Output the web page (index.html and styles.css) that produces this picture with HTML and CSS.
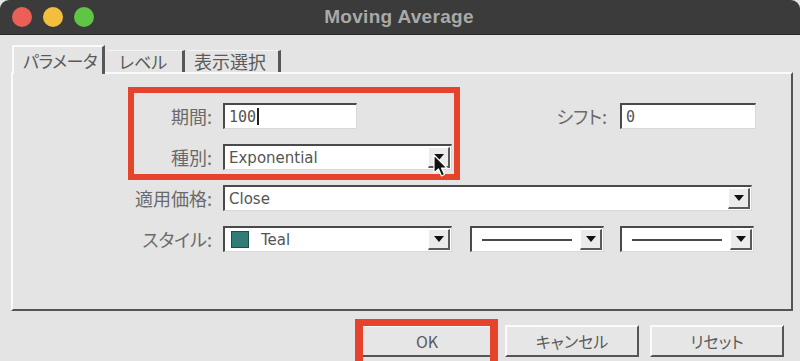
FILE: index.html
```html
<!DOCTYPE html>
<html lang="ja">

<head>
    <meta charset="UTF-8">
    <meta name="viewport" content="width=device-width, initial-scale=1.0">
    <title>Moving Average</title>
    <link rel="stylesheet" href="styles.css">
</head>

<body>
    <div class="window">
        <div class="titlebar">
            <div class="lights">
                <span class="light red"></span>
                <span class="light yellow"></span>
                <span class="light green"></span>
            </div>
            <div class="title">Moving Average</div>
        </div>

        <div class="dialog">
            <div class="tabs">
                <div class="tab active">パラメータ</div>
                <div class="tab">レベル</div>
                <div class="tab">表示選択</div>
            </div>

            <div class="panel">
                <div class="row">
                    <label class="label">期間:</label>
                    <div class="field w134 mono">100<span class="caret"></span></div>
                    <label class="label shift-label">シフト:</label>
                    <div class="field w136 mono">0</div>
                </div>
                <div class="row">
                    <label class="label">種別:</label>
                    <div class="field select w229">
                        <span class="value">Exponential</span>
                        <span class="drop"><span class="tri"></span></span>
                    </div>
                </div>
                <div class="row">
                    <label class="label">適用価格:</label>
                    <div class="field select w529">
                        <span class="value">Close</span>
                        <span class="drop"><span class="tri"></span></span>
                    </div>
                </div>
                <div class="row">
                    <label class="label">スタイル:</label>
                    <div class="field select w229">
                        <span class="swatch"></span>
                        <span class="value">Teal</span>
                        <span class="drop"><span class="tri"></span></span>
                    </div>
                    <div class="field select w134 gap18">
                        <span class="line"></span>
                        <span class="drop"><span class="tri"></span></span>
                    </div>
                    <div class="field select w134 gap16">
                        <span class="line"></span>
                        <span class="drop"><span class="tri"></span></span>
                    </div>
                </div>
            </div>

            <div class="buttons">
                <button class="btn">OK</button>
                <button class="btn">キャンセル</button>
                <button class="btn">リセット</button>
            </div>
        </div>
    </div>

    <!-- annotations drawn over the dialog -->
    <div class="mark mark-fields"></div>
    <div class="mark mark-ok"></div>
    <svg class="pointer" width="16" height="24" viewBox="0 0 16 24">
        <path d="M1 1 L1 19 L5.5 15 L8.5 22 L11.5 20.5 L8.5 14 L14 14 Z" fill="#111" stroke="#fff" stroke-width="1.2" stroke-linejoin="round"/>
    </svg>
</body>

</html>
```

FILE: styles.css
```css
body {
    margin: 0;
    width: 800px;
    height: 361px;
    overflow: hidden;
    background: #e4e4e4;
    font-family: "Noto Sans CJK JP", "DejaVu Sans", sans-serif;
    font-feature-settings: "palt";
    position: relative;
}

.window {
    height: 361px;
    background: #e4e4e4;
}

.titlebar {
    height: 35px;
    background: #3b3b3b;
    border-radius: 9px 9px 0 0;
    display: flex;
    align-items: center;
    position: relative;
    border-bottom: 1px solid #2a2a2a;
    box-sizing: border-box;
}

.lights {
    display: flex;
    gap: 11px;
    padding-left: 12px;
    padding-bottom: 1px;
}

.light {
    width: 20px;
    height: 20px;
    border-radius: 50%;
}

.red {
    background: #ec5f57;
}

.yellow {
    background: #f4bd3b;
}

.green {
    background: #5ec545;
}

.title {
    flex: 1;
    text-align: center;
    margin-right: 96px;
    color: #a9a9a9;
    font-family: "Liberation Sans", sans-serif;
    font-weight: bold;
    font-size: 19px;
    letter-spacing: 0.3px;
}

.dialog {
    padding: 10px 7px 0 11px;
}

.tabs {
    display: flex;
    align-items: flex-end;
    height: 27px;
    padding-left: 1px;
}

.tab {
    height: 22px;
    line-height: 21px;
    font-size: 17px;
    color: #5a5a5a;
    border-top: 1px solid #f4f4f4;
    border-right: 3px solid #575757;
    margin-right: 2px;
    box-sizing: border-box;
    white-space: nowrap;
}

.tab:nth-child(1) {
    width: 93px;
    padding-left: 9px;
    letter-spacing: -0.5px;
}

.tab:nth-child(2) {
    width: 78px;
    padding-left: 12px;
}

.tab:nth-child(3) {
    width: 94px;
    padding-left: 7px;
    font-size: 18px;
}

.tab.active {
    height: 29px;
    line-height: 27px;
    border-top: 2px solid #fafafa;
    border-left: 2px solid #fafafa;
    background: #e4e4e4;
    margin-bottom: -2px;
    position: relative;
    z-index: 1;
}

.panel {
    height: 239px;
    box-sizing: border-box;
    border-top: 2px solid #fafafa;
    border-left: 2px solid #fafafa;
    border-right: 2px solid #555;
    border-bottom: 2px solid #555;
    padding-top: 29px;
    display: flex;
    flex-direction: column;
    gap: 15px;
}

.row {
    display: flex;
    align-items: center;
    height: 26px;
}

.label {
    width: 199px;
    margin-right: 11px;
    text-align: right;
    font-size: 18px;
    color: #6a6a6a;
}

.shift-label {
    width: 250px;
    margin-right: 13px;
}

.field {
    height: 26px;
    box-sizing: border-box;
    background: #fff;
    border-top: 2px solid #4a4a4a;
    border-left: 2px solid #4a4a4a;
    border-right: 1px solid #d8d8d8;
    border-bottom: 1px solid #d8d8d8;
    display: flex;
    align-items: center;
    padding-left: 4px;
    font-family: "DejaVu Sans", sans-serif;
    font-size: 15px;
    color: #555;
    position: relative;
}

.mono {
    font-family: "DejaVu Sans Mono", monospace;
}

.caret {
    display: inline-block;
    width: 2px;
    height: 17px;
    background: #222;
    margin-left: 1px;
}

.w134 {
    width: 134px;
}

.w136 {
    width: 136px;
}

.w229 {
    width: 229px;
}

.w529 {
    width: 529px;
}

.gap18 {
    margin-left: 18px;
}

.gap16 {
    margin-left: 16px;
}

.select .value {
    flex: 1;
}

.drop {
    width: 22px;
    height: 21px;
    margin-right: 1px;
    box-sizing: border-box;
    background: #ebebeb;
    border-top: 1px solid #fff;
    border-left: 1px solid #fff;
    border-right: 2px solid #5a5a5a;
    border-bottom: 2px solid #5a5a5a;
    display: flex;
    align-items: center;
    justify-content: center;
}

.tri {
    width: 0;
    height: 0;
    border-left: 5px solid transparent;
    border-right: 5px solid transparent;
    border-top: 6px solid #111;
}

.swatch {
    width: 18px;
    height: 17px;
    margin: 0 12px 0 2px;
    background: #2f7d76;
    border: 1px solid #1f4d49;
    box-sizing: border-box;
}

.line {
    flex: 1;
    height: 2px;
    background: #4a4a4a;
    margin: 0 8px 0 6px;
}

.buttons {
    display: flex;
    justify-content: flex-end;
    gap: 11px;
    padding-right: 9px;
    margin-top: 14px;
}

.btn {
    width: 134px;
    height: 32px;
    background: #e6e6e6;
    border-top: 2px solid #fafafa;
    border-left: 2px solid #fafafa;
    border-right: 2px solid #555;
    border-bottom: 2px solid #555;
    font-family: "Noto Sans CJK JP", "DejaVu Sans", sans-serif;
    font-feature-settings: "palt";
    font-size: 16px;
    color: #5a5a5a;
    padding: 0;
}

.mark {
    position: absolute;
    box-sizing: border-box;
    border: 6px solid #e5432b;
}

.mark-fields {
    left: 128px;
    top: 87px;
    width: 332px;
    height: 93px;
}

.mark-ok {
    left: 355px;
    top: 319px;
    width: 143px;
    height: 50px;
    border-width: 7px 8px;
}

.pointer {
    position: absolute;
    left: 433px;
    top: 154px;
}
```
